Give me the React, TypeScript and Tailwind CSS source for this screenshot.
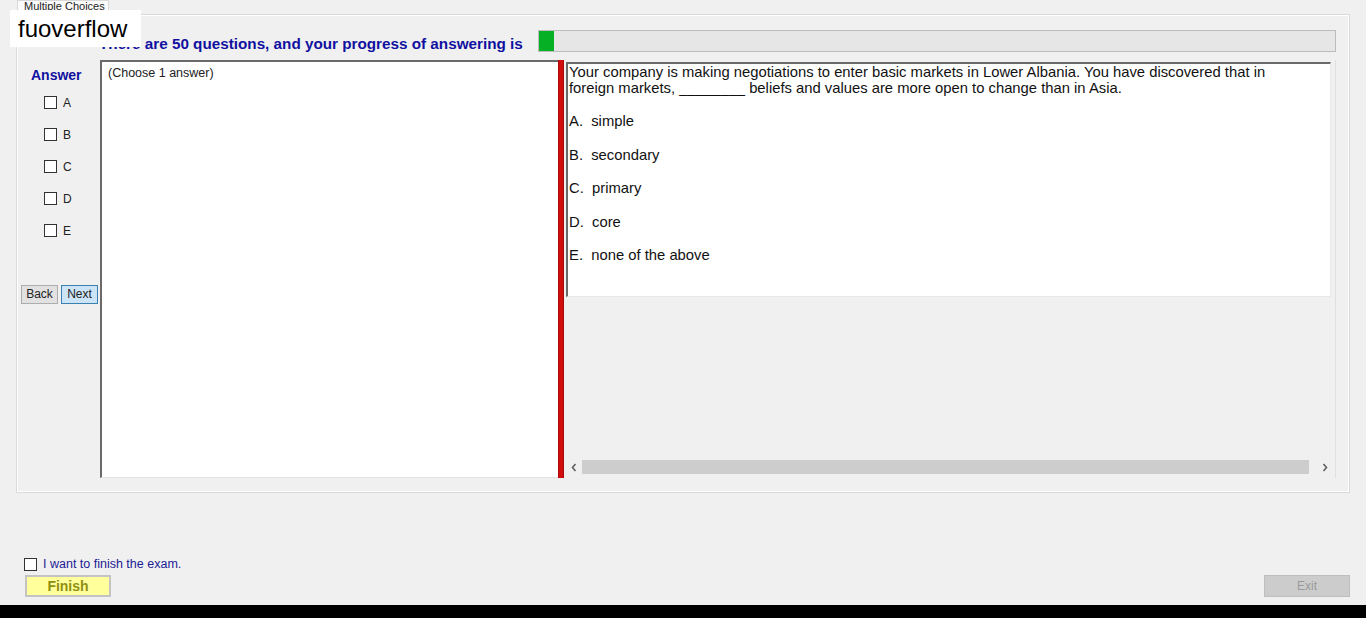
const options = [
  { key: 'A', text: 'simple' },
  { key: 'B', text: 'secondary' },
  { key: 'C', text: 'primary' },
  { key: 'D', text: 'core' },
  { key: 'E', text: 'none of the above' },
]

function Box({ className = '' }: { className?: string }) {
  return <span className={`block w-[13px] h-[13px] border border-[#333] bg-white ${className}`} />
}

function Chevron({ dir }: { dir: 'left' | 'right' }) {
  return (
    <svg width="8" height="9" viewBox="0 0 8 9" className="block">
      <path
        d={dir === 'left' ? 'M5.5 1 L2.5 4.5 L5.5 8' : 'M2.5 1 L5.5 4.5 L2.5 8'}
        fill="none"
        stroke="#606060"
        strokeWidth="1.6"
      />
    </svg>
  )
}

export default function App() {
  return (
    <div className="relative w-[1366px] h-[618px] bg-[#f0f0f0] flex flex-col overflow-hidden font-['Liberation_Sans',Arial,sans-serif]">
      {/* tab strip */}
      <div className="h-[14px] pl-[17px] flex">
        <div className="w-[92px] h-[15px] bg-[#fbfbfb] border border-b-0 border-[#d9d9d9] text-[11px] leading-[10px] pl-[6px] text-[#222] overflow-hidden">
          Multiple Choices
        </div>
      </div>

      {/* tab page */}
      <div className="ml-[16px] w-[1334px] h-[479px] border border-[#dadada] flex flex-col">
        <div className="flex-1 border border-white flex flex-col">
          {/* header + progress */}
          <div className="h-[36px] pt-[13px] flex items-end">
            <div className="w-[520px] pl-[81px] text-[15.25px] font-bold text-[#1010a0] leading-[16px] whitespace-nowrap">
              There are 50 questions, and your progress of answering is
            </div>
            <div className="w-[798px] h-[22px] bg-[#e6e6e6] border border-[#bcbcbc] flex">
              <div className="w-[15px] h-full bg-[#06b025]" />
            </div>
          </div>

          <div className="flex mt-[8px] h-[418px]">
            {/* answer column */}
            <div className="w-[82px] flex flex-col">
              <div className="pl-[13px] pt-[7px] text-[14px] font-bold text-[#1010a0] leading-[17px]">Answer</div>
              <div className="flex flex-col gap-[19px] pl-[26px] pt-[12px]">
                {options.map((o) => (
                  <label key={o.key} className="flex items-center gap-[6px] text-[12px] text-[#222] h-[13px]">
                    <Box />
                    {o.key}
                  </label>
                ))}
              </div>
              <div className="flex gap-[3px] pl-[3px] mt-[48px]">
                <button className="w-[37px] h-[19px] bg-[#e1e1e1] border border-[#adadad] text-[12px] leading-[17px] text-[#222]">Back</button>
                <button className="w-[37px] h-[19px] bg-[#cce4f7] border border-[#3c7fb1] text-[12px] leading-[17px] text-[#222]">Next</button>
              </div>
            </div>

            {/* choose panel */}
            <div className="w-[458px] bg-white border-l-2 border-t-2 border-[#6a6a6a] border-b border-r-0 border-b-[#e3e3e3] pl-[6px] pt-[4px]">
              <div className="text-[12.5px] text-[#222] leading-[14px]">(Choose 1 answer)</div>
            </div>

            {/* splitter */}
            <div className="w-[6px] bg-[#d10d0d] border-l border-r border-[#a80808]" />

            {/* question area */}
            <div className="w-[772px] flex flex-col border-r border-[#e0e0e0] pl-[2px] pt-[2px] pr-[4px] pb-[2px]">
              <div className="h-[235px] bg-white border-t-2 border-l-2 border-[#6a6a6a] border-b border-r border-b-[#e8e8e8] border-r-[#e8e8e8] pl-[1px] text-[14.8px] text-[#111] leading-[16px]">
                <p>
                  Your company is making negotiations to enter basic markets in Lower Albania. You have discovered that in
                  <br />
                  foreign markets, ________ beliefs and values are more open to change than in Asia.
                </p>
                {options.map((o, i) => (
                  <p key={o.key} className={`whitespace-pre ${i === 0 ? 'mt-[17px]' : 'mt-[17.5px]'}`}>
                    {o.key}.  {o.text}
                  </p>
                ))}
              </div>
              <div className="flex-1" />
              <div className="h-[16px] -mr-[3px] flex items-center bg-[#f0f0f0] mb-[1px]">
                <span className="w-[16px] flex justify-center"><Chevron dir="left" /></span>
                <div className="flex-1 h-[14px] bg-[#cdcdcd]" />
                <span className="w-[25px] flex justify-end pr-[5px]"><Chevron dir="right" /></span>
              </div>
            </div>
          </div>
        </div>
      </div>

      {/* bottom controls */}
      <div className="flex-1 flex items-end justify-between pb-[8px]">
        <div className="pl-[24px] flex flex-col">
          <label className="flex items-center gap-[6px] text-[12.5px] text-[#1c1c96]">
            <Box />
            I want to finish the exam.
          </label>
          <button className="mt-[1px] ml-[1px] w-[86px] h-[22px] bg-[#ffff9c] border-2 border-[#c4c4c4] text-[14px] font-bold text-[#8f8f10] leading-[16px]">
            Finish
          </button>
        </div>
        <button className="mr-[16px] w-[86px] h-[22px] bg-[#cccccc] border border-[#bfbfbf] text-[12px] text-[#9a9a9a]">
          Exit
        </button>
      </div>

      <div className="h-[13px] bg-black" />

      {/* watermark label */}
      <div className="absolute left-[10px] top-[10px] w-[131px] h-[37px] bg-white pl-[8px] text-[24px] leading-[37px] text-black">
        fuoverflow
      </div>
    </div>
  )
}
